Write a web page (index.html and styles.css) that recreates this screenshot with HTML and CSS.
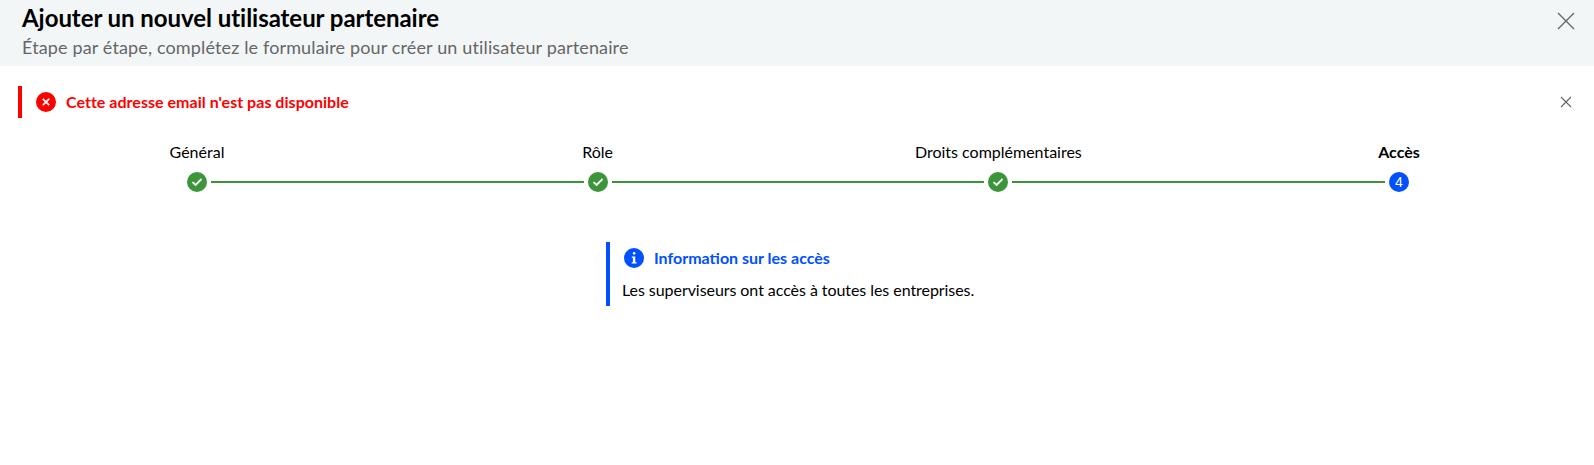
FILE: index.html
```html
<!DOCTYPE html>
<html lang="fr">
<head>
  <meta charset="UTF-8">
  <meta name="viewport" content="width=device-width, initial-scale=1.0">
  <title>Ajouter un nouvel utilisateur partenaire</title>
  <link rel="stylesheet" href="styles.css">
</head>
<body>
  <header class="header">
    <div>
      <h1 class="title">Ajouter un nouvel utilisateur partenaire</h1>
      <p class="subtitle">Étape par étape, complétez le formulaire pour créer un utilisateur partenaire</p>
    </div>
    <svg class="close-big" width="18" height="18" viewBox="0 0 18 18"><path d="M1 1L17 17M17 1L1 17" stroke="#5f6468" stroke-width="1.3" fill="none"/></svg>
  </header>

  <!-- Message d'erreur -->
  <div class="alert">
    <svg class="alert-icon" width="20" height="20" viewBox="0 0 20 20"><circle cx="10" cy="10" r="10" fill="#ff0000"/><path d="M6.8 6.8L13.2 13.2M13.2 6.8L6.8 13.2" stroke="#fff" stroke-width="1.8" fill="none"/></svg>
    <span class="alert-text">Cette adresse email n'est pas disponible</span>
    <svg class="close-small" width="12" height="12" viewBox="0 0 12 12"><path d="M1 1L11 11M11 1L1 11" stroke="#5f6468" stroke-width="1.1" fill="none"/></svg>
  </div>

  <!-- Étapes -->
  <div class="stepper">
    <div class="step">
      <span class="step-label">Général</span>
      <span class="step-dot done"><svg width="12" height="10" viewBox="0 0 12 10"><path d="M1.5 5.2L4.6 8L10.5 2" stroke="#fff" stroke-width="1.8" fill="none"/></svg></span>
    </div>
    <div class="step-line"></div>
    <div class="step">
      <span class="step-label">Rôle</span>
      <span class="step-dot done"><svg width="12" height="10" viewBox="0 0 12 10"><path d="M1.5 5.2L4.6 8L10.5 2" stroke="#fff" stroke-width="1.8" fill="none"/></svg></span>
    </div>
    <div class="step-line"></div>
    <div class="step">
      <span class="step-label">Droits complémentaires</span>
      <span class="step-dot done"><svg width="12" height="10" viewBox="0 0 12 10"><path d="M1.5 5.2L4.6 8L10.5 2" stroke="#fff" stroke-width="1.8" fill="none"/></svg></span>
    </div>
    <div class="step-line"></div>
    <div class="step">
      <span class="step-label current">Accès</span>
      <span class="step-dot active">4</span>
    </div>
  </div>

  <!-- Information -->
  <div class="info-wrap">
    <div class="info">
      <div class="info-head">
        <svg width="20" height="20" viewBox="0 0 20 20"><circle cx="10" cy="10" r="10" fill="#0050ff"/><rect x="8.8" y="4" width="2.6" height="2.6" rx="1.2" fill="#fff"/><path d="M7.8 8.4H11.3V14.2H12.6V15.6H7.6V14.2H8.9V9.8H7.8Z" fill="#fff"/></svg>
        <span class="info-title">Information sur les accès</span>
      </div>
      <p class="info-text">Les superviseurs ont accès à toutes les entreprises.</p>
    </div>
  </div>
</body>
</html>
```

FILE: styles.css
```css
body {
  margin: 0;
  height: 465px;
  overflow: hidden;
  background-color: #fff;
  color: #000;
  font-family: Lato, "Open Sans", sans-serif;
  font-size: 16px;
}
.header {
  display: flex;
  justify-content: space-between;
  height: 66px;
  padding: 0 19px 0 22px;
  background-color: #f3f6f7;
}
.title {
  margin: 3px 0 0;
  font-size: 24px;
  line-height: 30px;
  font-weight: 700;
  letter-spacing: -0.05px;
}
.subtitle {
  margin: 3px 0 0;
  font-size: 18px;
  line-height: 22px;
  color: #666;
  letter-spacing: 0.14px;
}
.close-big {
  margin-top: 12px;
}
.alert {
  display: flex;
  align-items: center;
  height: 32px;
  margin: 20px 22px 0 18px;
  padding-left: 4px;
  border-left: 4px solid #ff0000;
  box-sizing: border-box;
}
.alert-icon {
  margin-left: 10px;
  margin-right: 10px;
}
.alert-text {
  flex: 1;
  margin-top: -2px;
  color: #ff0000;
  font-weight: 700;
  letter-spacing: 0.03px;
}
.stepper {
  display: flex;
  align-items: flex-end;
  margin-top: 24px;
  padding: 0 185px 0 187px;
}
.step {
  display: flex;
  flex-direction: column;
  align-items: center;
  width: 20px;
}
.step-label {
  white-space: nowrap;
  line-height: 20px;
  margin-bottom: 10px;
}
.step-label.current {
  font-weight: 700;
}
.step-dot {
  display: flex;
  align-items: center;
  justify-content: center;
  width: 20px;
  height: 20px;
  border-radius: 50%;
  color: #fff;
  font-family: "Liberation Sans", sans-serif;
  font-size: 14px;
}
.step-dot.done {
  background-color: #3a9639;
}
.step-dot.active {
  background-color: #0050ff;
}
.step-line {
  flex: 1;
  height: 2px;
  margin: 0 4px 9px;
  background-color: #3a9639;
}
.info-wrap {
  display: flex;
  margin-top: 50px;
  padding-left: 606px;
}
.info {
  height: 64px;
  padding-left: 12px;
  border-left: 4px solid #0050ff;
  box-sizing: border-box;
}
.info-head {
  display: flex;
  align-items: center;
  gap: 10px;
  margin: 6px 0 0 2px;
}
.info-title {
  margin-top: -2px;
  color: #0050ff;
  font-weight: 700;
}
.info-text {
  margin: 12px 0 0;
  line-height: 20px;
  letter-spacing: -0.06px;
}
```
